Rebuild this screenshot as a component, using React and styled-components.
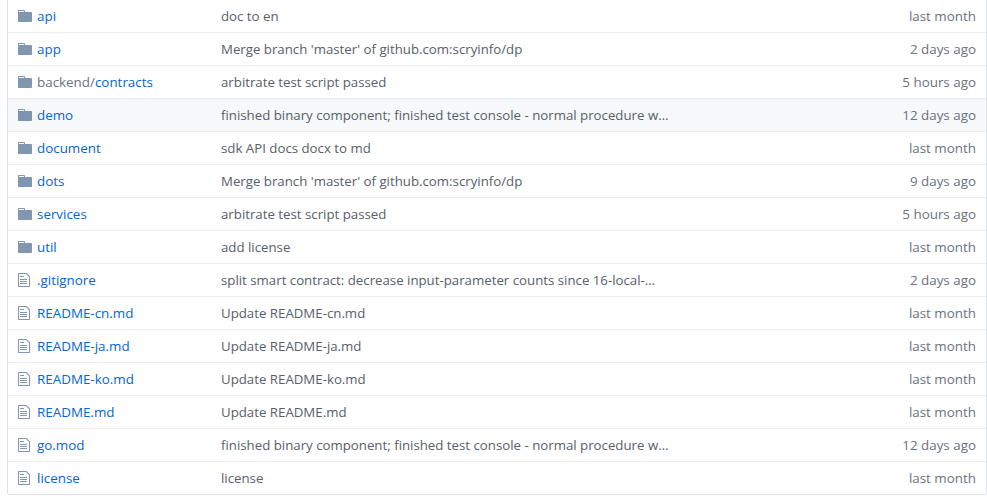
import React from "react";
import styled, { createGlobalStyle } from "styled-components";

const GlobalStyle = createGlobalStyle`
  body {
    margin: 0;
    background: #fff;
    font-family: "Open Sans", "Liberation Sans", sans-serif;
    font-size: 13.4px;
    color: #24292e;
  }
`;

const FileList = styled.div`
  margin-left: 7px;
  width: 980px;
  box-sizing: border-box;
  border: 1px solid #dfe2e5;
  border-top: none;
  border-radius: 0 0 3px 3px;
`;

const Row = styled.div`
  display: flex;
  align-items: center;
  height: 32px;
  padding-left: 10px;
  padding-right: 10px;
  background: ${(p) => (p.$active ? "#f6f8fa" : "#fff")};
  border-top: ${(p) => (p.$first ? "none" : "1px solid #eaecef")};
`;

const IconCell = styled.div`
  display: flex;
  width: 19px;
  flex-shrink: 0;
`;

const Icon = styled.svg`
  display: block;
  width: ${(p) => p.$w}px;
  height: 16px;
  fill: rgba(3, 47, 98, 0.5);
`;

const NameCell = styled.div`
  width: 184px;
  flex-shrink: 0;
  white-space: nowrap;
`;

const Prefix = styled.span`
  color: #6a737d;
`;

const Link = styled.a`
  color: #0366d6;
  text-decoration: none;
`;

const Message = styled.div`
  flex: 1;
  color: #586069;
  font-size: 13.25px;
  white-space: nowrap;
`;

const Age = styled.div`
  color: #6a737d;
  text-align: right;
  white-space: nowrap;
`;

const FolderIcon = () => (
  <Icon $w={14} viewBox="0 0 14 16">
    <path d="M13 4H7V3c0-.66-.31-1-1-1H1c-.55 0-1 .45-1 1v10c0 .55.45 1 1 1h12c.55 0 1-.45 1-1V5c0-.55-.45-1-1-1zM6 4H1V3h5v1z" />
  </Icon>
);

const FileIcon = () => (
  <Icon $w={12} viewBox="0 0 12 16">
    <path d="M6 5H2V4h4v1zM2 8h7V7H2v1zm0 2h7V9H2v1zm0 2h7v-1H2v1zm10-7.5V14c0 .55-.45 1-1 1H1c-.55 0-1-.45-1-1V2c0-.55.45-1 1-1h7.5L12 4.5zM11 5L8 2H1v12h10V5z" />
  </Icon>
);

const longFinish = "finished binary component; finished test console - normal procedure w…";
const mergeMsg = "Merge branch 'master' of github.com:scryinfo/dp";

const files = [
  { name: "api", dir: true, msg: "doc to en", age: "last month" },
  { name: "app", dir: true, msg: mergeMsg, age: "2 days ago" },
  { prefix: "backend/", name: "contracts", dir: true, msg: "arbitrate test script passed", age: "5 hours ago" },
  { name: "demo", dir: true, msg: longFinish, age: "12 days ago", active: true },
  { name: "document", dir: true, msg: "sdk API docs docx to md", age: "last month" },
  { name: "dots", dir: true, msg: mergeMsg, age: "9 days ago" },
  { name: "services", dir: true, msg: "arbitrate test script passed", age: "5 hours ago" },
  { name: "util", dir: true, msg: "add license", age: "last month" },
  { name: ".gitignore", msg: "split smart contract: decrease input-parameter counts since 16-local-…", age: "2 days ago" },
  { name: "README-cn.md", msg: "Update README-cn.md", age: "last month" },
  { name: "README-ja.md", msg: "Update README-ja.md", age: "last month" },
  { name: "README-ko.md", msg: "Update README-ko.md", age: "last month" },
  { name: "README.md", msg: "Update README.md", age: "last month" },
  { name: "go.mod", msg: longFinish, age: "12 days ago" },
  { name: "license", msg: "license", age: "last month" },
];

const App = () => (
  <>
    <GlobalStyle />
    <FileList>
      {files.map((f, i) => (
        <Row key={f.name} $first={i === 0} $active={f.active}>
          <IconCell>{f.dir ? <FolderIcon /> : <FileIcon />}</IconCell>
          <NameCell>
            {f.prefix && <Prefix>{f.prefix}</Prefix>}
            <Link href="#">{f.name}</Link>
          </NameCell>
          <Message>{f.msg}</Message>
          <Age>{f.age}</Age>
        </Row>
      ))}
    </FileList>
  </>
);

export default App;
